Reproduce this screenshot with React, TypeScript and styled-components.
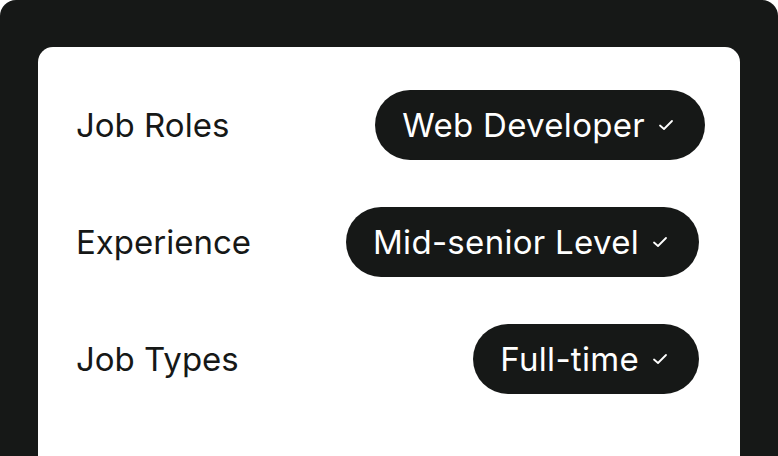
import { FunctionComponent } from 'react'
import styled, { createGlobalStyle } from 'styled-components'

const Global = createGlobalStyle`
  html, body {
    margin: 0;
    padding: 0;
    background: #ffffff;
  }
  body {
    font-family: Inter, "Noto Sans", sans-serif;
  }
`

const Frame = styled.div`
  box-sizing: border-box;
  width: 778px;
  height: 456px;
  background: #161817;
  border-radius: 16px 16px 0 0;
  padding: 47px 38px 0 38px;
  display: flex;
`

const Card = styled.div`
  flex: 1;
  background: #ffffff;
  border-radius: 15px 15px 0 0;
  padding: 43px 41px 0 38px;
  display: flex;
  flex-direction: column;
  gap: 47px;
`

const Row = styled.div`
  display: flex;
  align-items: center;
  justify-content: space-between;
  height: 70px;
`

const Label = styled.span`
  font-size: 33px;
  color: #161817;
  letter-spacing: 0;
`

const Pill = styled.div<{ $nudge?: number }>`
  display: flex;
  align-items: center;
  gap: 13px;
  height: 70px;
  box-sizing: border-box;
  padding: 0 31px 0 27px;
  margin-right: ${p => -(p.$nudge ?? 0)}px;
  border-radius: 35px;
  background: #161817;
  color: #ffffff;
  font-size: 33px;
  letter-spacing: 0.3px;
`

const Check = () => (
  <svg width="16" height="12" viewBox="0 0 16 12" fill="none">
    <path d="M2 6.5 L6 10 L14 2" stroke="#ffffff" strokeWidth="1.8" strokeLinecap="round" strokeLinejoin="round" />
  </svg>
)

interface FilterProps {
  label: string;
  value: string;
  nudge?: number;
}

const Filter: FunctionComponent<FilterProps> = ({ label, value, nudge }) => (
  <Row>
    <Label>{label}</Label>
    <Pill $nudge={nudge}>
      {value}
      <Check />
    </Pill>
  </Row>
)

const App = () => {
  return (
    <>
      <Global />
      <Frame>
        <Card>
          <Filter label="Job Roles" value="Web Developer" nudge={6} />
          <Filter label="Experience" value="Mid-senior Level" />
          <Filter label="Job Types" value="Full-time" />
        </Card>
      </Frame>
    </>
  )
}

export default App
